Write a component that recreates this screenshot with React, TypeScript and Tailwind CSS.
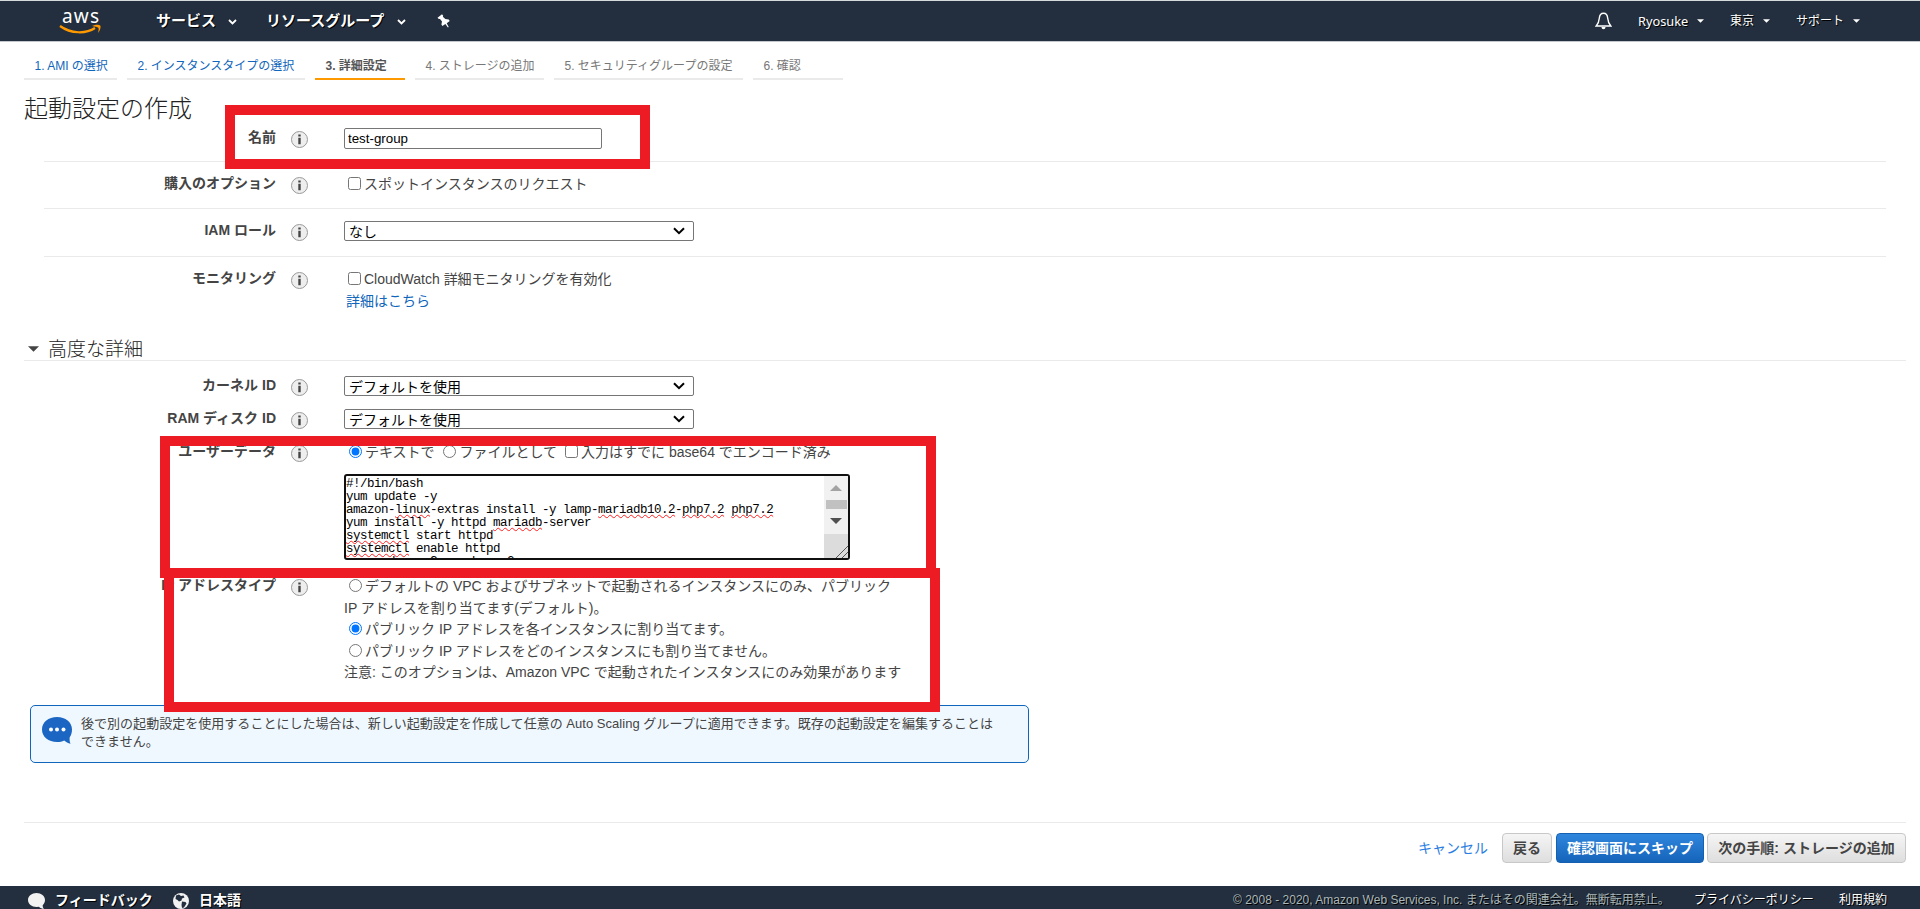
import React from 'react'

const steps = [
  {label: '1. AMI の選択', style: 'w-[93px] text-[#1166bb] border-[#eaeaea]'},
  {label: '2. インスタンスタイプの選択', style: 'w-[178px] text-[#1166bb] border-[#eaeaea]'},
  {label: '3. 詳細設定', style: 'w-[90px] text-[#555555] font-bold border-[#ff9900]'},
  {label: '4. ストレージの追加', style: 'w-[129px] text-[#777777] border-[#eaeaea]'},
  {label: '5. セキュリティグループの設定', style: 'w-[189px] text-[#777777] border-[#eaeaea]'},
  {label: '6. 確認', style: 'w-[90px] text-[#777777] border-[#eaeaea]'},
]

const Chevron = ({className = ''}) => (
  <svg className={className} viewBox="0 0 9 6" fill="none" stroke="currentColor" strokeWidth="1.8">
    <path d="M1 1l3.5 3.5L8 1"/>
  </svg>
)

const Caret = ({className = ''}) => (
  <svg className={className} viewBox="0 0 10 5" fill="currentColor">
    <path d="M0 0h10L5 5z"/>
  </svg>
)

const Info = () => (
  <svg className="ml-[15px] mt-[3px] w-[17px] h-[17px] shrink-0" viewBox="0 0 17 17">
    <circle cx="8.5" cy="8.5" r="8" fill="#eeeeee" stroke="#999999"/>
    <path d="M7.3 3.4h2.4v2.2H7.3zM7.3 6.800h2.4v6.400H7.3z" fill="#444444"/>
  </svg>
)

const Row = ({label, className, children}: {label: string, className: string, children: React.ReactNode}) => (
  <div className={`flex items-start ${className}`}>
    <div className="w-[276px] -mt-px shrink-0 text-right font-bold leading-5 whitespace-nowrap">{label}</div>
    <Info/>
    <div className="ml-9 leading-[21.6px] whitespace-nowrap">{children}</div>
  </div>
)

const Select = ({value}: {value: string}) => (
  <div className="w-[350px] h-5 flex items-center justify-between border border-[#767676] rounded-[2px] pl-1 pr-2 text-black">
    <span className="leading-5 pt-[2px]">{value}</span>
    <svg className="w-3 h-2" viewBox="0 0 12 8" fill="none" stroke="black" strokeWidth="2">
      <path d="M1 1.2l5 5 5-5"/>
    </svg>
  </div>
)

const Check = ({text}: {text: string}) => (
  <label><input type="checkbox" className="w-[13px] h-[13px] ml-1 mr-[3px] align-[-1px]"/>{text}</label>
)

const Radio = ({text, checked = false}: {text: string, checked?: boolean}) => (
  <label>
    <input type="radio" checked={checked} readOnly className="w-[13px] h-[13px] ml-[5px] mr-[3px] align-[-1px]"/>{text}
  </label>
)

const Misspelled = ({children}: {children: string}) => (
  <span className="underline decoration-wavy decoration-[#ff2020] decoration-[0.5px] underline-offset-[0.5px] [text-decoration-skip-ink:none]">{children}</span>
)

const Divider = () => <div className="ml-11 mr-[34px] h-px bg-[#eaeaea]"/>

const Header = () => (
  <header className="h-[42px] bg-[#232f3e] border-t border-t-[#d5dbdb] border-b border-b-[#c4c8cc] flex items-center text-white [text-shadow:1px_1px_0_#000]">
    <svg className="ml-[60px] mt-px w-[42px] h-8 overflow-visible" viewBox="0 0 42 32">
      <text x="2" y="16.5" fill="#fff" fontFamily="Noto Sans" fontSize="19" textLength="37" style={{textShadow: 'none'}}>aws</text>
      <path d="M0 20c11 8 26 8 35 2" fill="none" stroke="#ff9900" strokeWidth="2.2"/>
      <path d="M32 20c4-1.800 7-1.500 8.200-.6.900 1.300 0 5-2.200 7.600.6-2.300 1-4.500.3-5.300-.9-.9-3.200-1-6.300-1.700z" fill="#ff9900"/>
    </svg>
    <span className="ml-[54px] w-[60px] text-[15px] font-bold whitespace-nowrap">サービス</span>
    <Chevron className="ml-3 mt-[2px] w-[9px] h-[6px]"/>
    <span className="ml-[29px] w-[119px] text-[15px] font-bold whitespace-nowrap">リソースグループ</span>
    <Chevron className="ml-3 mt-[2px] w-[9px] h-[6px]"/>
    <svg className="ml-[31px] w-[14px] h-[14px]" viewBox="0 0 14 14" fill="#fff">
      <path d="M.5 3.800L5 .3l1.200 1.500-.3 1L8.300 5l3.400.6 1 1.300-3 2.300 2 3.900-.8.5-2.500-3.700-3 2.200-1-1.500.6-3.100-2-2.600-1.200.2z"/>
    </svg>
    <svg className="ml-auto w-[17px] h-[18px]" viewBox="0 0 17 18">
      <path d="M8.500 1.300c-3 0-4 2.200-4.200 5C4 10 3.500 11.500 1.200 14h14.600c-2.300-2.500-2.800-4-3.100-7.700-.2-2.800-1.200-5-4.200-5z" fill="none" stroke="#fff" strokeWidth="1.400"/>
      <path d="M6.500 15h4c0 3-4 3-4 0z" fill="#fff"/>
    </svg>
    <span className="ml-[26px] w-[50px] text-[12.8px] font-['Noto_Sans'] whitespace-nowrap">Ryosuke</span>
    <Caret className="ml-[9px] w-[7px] h-1"/>
    <span className="ml-[26px] w-6 text-xs">東京</span>
    <Caret className="ml-[9px] w-[7px] h-1"/>
    <span className="ml-[26px] w-12 text-xs">サポート</span>
    <Caret className="ml-[9px] mr-[60px] w-[7px] h-1"/>
  </header>
)

const UserData = () => (
  <div className="mt-[10px] w-[506px] h-[86px] flex bg-white border-2 border-[#101010] rounded-[3px]">
    <pre className="flex-1 overflow-hidden text-black text-[12.5px] tracking-[-0.5px] leading-[13px] pt-[2px] font-['Liberation_Mono',monospace]">
      {'#!/bin/bash\nyum update -y\namazon-'}<Misspelled>linux</Misspelled>{'-extras install -y lamp-'}
      <Misspelled>mariadb10.2</Misspelled>-<Misspelled>php7.2</Misspelled>{' '}<Misspelled>php7.2</Misspelled>
      {'\nyum install -y httpd '}<Misspelled>mariadb</Misspelled>{'-server\n'}
      <Misspelled>systemctl</Misspelled>{' start httpd\n'}
      <Misspelled>systemctl</Misspelled>{' enable httpd\nusermod -a -G apache ec2-user'}
    </pre>
    <div className="w-6 flex flex-col items-center bg-[#f1f1f1]">
      <Caret className="mt-[9px] w-3 h-[6px] rotate-180 text-[#a3a3a3]"/>
      <div className="mt-[9px] w-[21px] h-[9px] bg-[#c1c1c1]"/>
      <Caret className="mt-[9px] w-3 h-[6px] text-[#505050]"/>
      <div className="mt-auto w-6 h-6 bg-[#dcdcdc] flex items-end justify-end">
        <svg className="w-3 h-3" viewBox="0 0 12 12" stroke="#555" strokeWidth="1">
          <path d="M0 12L12 0M6 12l6-6"/>
        </svg>
      </div>
    </div>
  </div>
)

const Footer = () => (
  <footer className="h-[23px] overflow-hidden bg-[#232f3e] flex items-start text-white [text-shadow:1px_1px_0_#000]">
    <svg className="ml-7 mt-[7px] w-[17px] h-4 shrink-0" viewBox="0 0 17 16" fill="#f2f2f2">
      <path d="M8.500 0C3.800 0 0 3 0 7s3.800 7 8.500 7l2.500-.3c1.200 1.500 3 2 5 2-1-.8-1.400-2-1.300-3.500C16.200 10.900 17 9 17 7c0-4-3.800-7-8.500-7z"/>
    </svg>
    <span className="ml-[10px] w-[98px] text-sm leading-[29px] font-bold whitespace-nowrap">フィードバック</span>
    <svg className="ml-5 mt-[7px] w-4 h-4 shrink-0" viewBox="0 0 16 16">
      <circle cx="8" cy="8" r="8" fill="#f2f2f2"/>
      <path d="M3 2.500l3-1 2 1.500 2.500-.5 1 2-2.500 1-.5 2L6 8.500 4.500 7 2.500 6zM9 8.500l3.500.5 1 1.500-2.500 4-2 .5L8.500 12z" fill="#232f3e"/>
    </svg>
    <span className="ml-[10px] text-sm leading-[29px] font-bold">日本語</span>
    <span className="ml-auto w-[430px] text-xs leading-[28px] text-[#aab7b8] whitespace-nowrap">© 2008 - 2020, Amazon Web Services, Inc. またはその関連会社。無断転用禁止。</span>
    <span className="ml-[31px] w-[120px] text-xs leading-[28px] whitespace-nowrap">プライバシーポリシー</span>
    <span className="ml-[25px] mr-[33px] w-12 text-xs leading-[28px]">利用規約</span>
  </footer>
)

export default function App() {
  return (
    <div className="relative w-[1920px] h-[909px] overflow-hidden flex flex-col bg-white text-sm text-[#444444] font-['Liberation_Sans','Noto_Sans_CJK_JP',sans-serif]">
      <Header/>

      <nav className="ml-6 h-[38px] flex gap-[10px] text-xs">
        {steps.map(s => (
          <div key={s.label} className={`pl-[10.5px] pt-[15px] leading-[18px] border-b-2 whitespace-nowrap ${s.style}`}>{s.label}</div>
        ))}
      </nav>

      <h1 className="ml-6 h-[42px] pt-[13px] text-2xl leading-8 font-light text-[#222222]">起動設定の作成</h1>

      <Row label="名前" className="h-[39px] pt-[6px]">
        <input defaultValue="test-group" className="block w-[258px] h-[21px] pl-[3px] border border-[#767676] rounded-[2px] text-[13.33px] text-black"/>
      </Row>
      <Divider/>
      <Row label="購入のオプション" className="h-[46px] pt-3">
        <Check text="スポットインスタンスのリクエスト"/>
      </Row>
      <Divider/>
      <Row label="IAM ロール" className="h-[47px] pt-3"><Select value="なし"/></Row>
      <Divider/>
      <Row label="モニタリング" className="h-20 pt-3">
        <Check text="CloudWatch 詳細モニタリングを有効化"/><br/>
        <a className="ml-[2px] text-[#1166bb]">詳細はこちら</a>
      </Row>

      <h2 className="ml-6 mr-[14px] h-6 pl-1 flex items-center border-b border-[#eaeaea] text-[19px] font-light text-[#222222]">
        <Caret className="mr-[9px] w-[11px] h-[6px] text-[#444444]"/><span className="pt-[2px]">高度な詳細</span>
      </h2>

      <Row label="カーネル ID" className="mt-[9px] h-[33px] pt-[6px]"><Select value="デフォルトを使用"/></Row>
      <Row label="RAM ディスク ID" className="h-[33px] pt-[6px]"><Select value="デフォルトを使用"/></Row>
      <Row label="ユーザーデータ" className="h-[132px] pt-[6px]">
        <Radio text="テキストで" checked/> <Radio text="ファイルとして"/> <Check text="入力はすでに base64 でエンコード済み"/>
        <UserData/>
      </Row>
      <Row label="IP アドレスタイプ" className="h-[137px] pt-[8px]">
        <Radio text="デフォルトの VPC およびサブネットで起動されるインスタンスにのみ、パブリック"/><br/>
        IP アドレスを割り当てます(デフォルト)。<br/>
        <Radio text="パブリック IP アドレスを各インスタンスに割り当てます。" checked/><br/>
        <Radio text="パブリック IP アドレスをどのインスタンスにも割り当てません。"/><br/>
        注意: このオプションは、Amazon VPC で起動されたインスタンスにのみ効果があります
      </Row>

      <div className="ml-[30px] w-[999px] h-[58px] flex items-start bg-[#f0f8ff] border border-[#1166bb] rounded-[5px]">
        <svg className="ml-[11px] mt-[11px] w-[30px] h-[27px] shrink-0" viewBox="0 0 30 27">
          <path d="M15 0C6.500 0 0 5 0 12.500S6.500 25 15 25c3 0 5-.4 7.200-1.500 1.700 1.600 3.800 2.700 6.300 3.300-.8-2-1.100-4-.8-6.500 1.500-2 2.300-4.600 2.300-7.800C30 5 23.500 0 15 0z" fill="#1b66c2"/>
          <g fill="#fff"><circle cx="9" cy="12.500" r="2"/><circle cx="15" cy="12.500" r="2"/><circle cx="21.500" cy="12.500" r="2"/></g>
        </svg>
        <p className="ml-[9px] mt-[9px] text-[13px] tracking-[0.03px] leading-[18.4px] whitespace-nowrap">
          後で別の起動設定を使用することにした場合は、新しい起動設定を作成して任意の Auto Scaling グループに適用できます。既存の起動設定を編集することは<br/>できません。
        </p>
      </div>

      <div className="mt-[59px] ml-6 mr-[14px] h-16 flex items-start justify-end pt-[10px] border-t border-[#eaeaea] whitespace-nowrap">
        <a className="mr-[14px] leading-[30px] text-[#2a7de1]">キャンセル</a>
        <button className="mr-1 w-[50px] h-[30px] border border-[#c8c8c8] rounded bg-linear-to-b from-[#f5f5f5] to-[#dedede] font-bold">戻る</button>
        <button className="mr-[3px] w-[148px] h-[30px] border border-[#1560b0] rounded bg-linear-to-b from-[#2f86dd] to-[#1464ba] text-white font-bold">確認画面にスキップ</button>
        <button className="w-[199px] h-[30px] border border-[#c8c8c8] rounded bg-linear-to-b from-[#f5f5f5] to-[#dedede] font-bold">次の手順: ストレージの追加</button>
      </div>

      <Footer/>

      {/* highlight frames drawn over the form */}
      <div className="absolute left-[225px] top-[105px] w-[425px] h-16 border-10 border-[#ed1c24]"/>
      <div className="absolute left-[160px] top-[436px] w-[776px] h-[142px] border-10 border-[#ed1c24]"/>
      <div className="absolute left-[164px] top-[568px] w-[776px] h-36 border-10 border-[#ed1c24]"/>
    </div>
  )
}
